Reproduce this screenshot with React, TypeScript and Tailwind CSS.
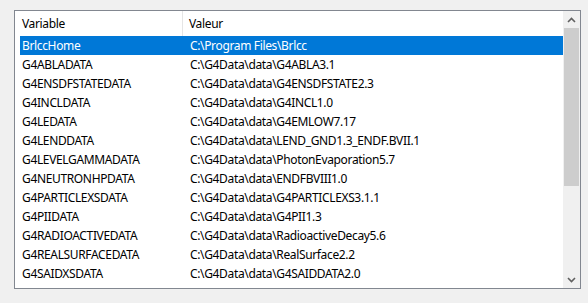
import React from "react";

const rows: [string, string][] = [
  ["BrlccHome", "C:\\Program Files\\Brlcc"],
  ["G4ABLADATA", "C:\\G4Data\\data\\G4ABLA3.1"],
  ["G4ENSDFSTATEDATA", "C:\\G4Data\\data\\G4ENSDFSTATE2.3"],
  ["G4INCLDATA", "C:\\G4Data\\data\\G4INCL1.0"],
  ["G4LEDATA", "C:\\G4Data\\data\\G4EMLOW7.17"],
  ["G4LENDDATA", "C:\\G4Data\\data\\LEND_GND1.3_ENDF.BVII.1"],
  ["G4LEVELGAMMADATA", "C:\\G4Data\\data\\PhotonEvaporation5.7"],
  ["G4NEUTRONHPDATA", "C:\\G4Data\\data\\ENDFBVIII1.0"],
  ["G4PARTICLEXSDATA", "C:\\G4Data\\data\\G4PARTICLEXS3.1.1"],
  ["G4PIIDATA", "C:\\G4Data\\data\\G4PII1.3"],
  ["G4RADIOACTIVEDATA", "C:\\G4Data\\data\\RadioactiveDecay5.6"],
  ["G4REALSURFACEDATA", "C:\\G4Data\\data\\RealSurface2.2"],
  ["G4SAIDXSDATA", "C:\\G4Data\\data\\G4SAIDDATA2.0"],
];

export default function App() {
  return (
    <div
      className="w-[588px] h-[303px] bg-[#f0f0f0] overflow-hidden pt-[10px] pl-[14px] text-[12px] tracking-[-0.35px] text-black"
      style={{ fontFamily: '"Noto Sans", "Open Sans", sans-serif' }}
    >
      <div className="w-[567px] h-[279px] border border-[#828790] bg-white flex">
        <div className="flex-1 flex flex-col pl-[5px] overflow-hidden">
          <div className="h-[25px] flex items-center shrink-0">
            <div className="w-[163px] pl-[2px] h-full flex items-center border-r border-[#e5e5e5]">
              Variable
            </div>
            <div className="pl-[6px]">Valeur</div>
          </div>
          {rows.map(([k, v], i) => (
            <div
              key={k}
              className={
                "h-[19px] flex items-center shrink-0 " +
                (i === 0 ? "bg-[#0078d7] text-white" : "")
              }
            >
              <div className="w-[170px] pl-[2px] whitespace-nowrap">{k}</div>
              <div className="whitespace-nowrap">{v}</div>
            </div>
          ))}
        </div>
        <div className="w-[17px] bg-[#f0f0f0] flex flex-col items-center shrink-0">
          <div className="h-[17px] w-full flex items-center justify-center">
            <svg width="9" height="6" viewBox="0 0 9 6">
              <path d="M1 5 L4.5 1.5 L8 5" stroke="#606060" strokeWidth="1.6" fill="none" />
            </svg>
          </div>
          <div className="w-[15px] h-[158px] bg-[#cdcdcd]" />
          <div className="flex-1" />
          <div className="h-[17px] w-full flex items-center justify-center">
            <svg width="9" height="6" viewBox="0 0 9 6">
              <path d="M1 1 L4.5 4.5 L8 1" stroke="#606060" strokeWidth="1.6" fill="none" />
            </svg>
          </div>
        </div>
      </div>
    </div>
  );
}
